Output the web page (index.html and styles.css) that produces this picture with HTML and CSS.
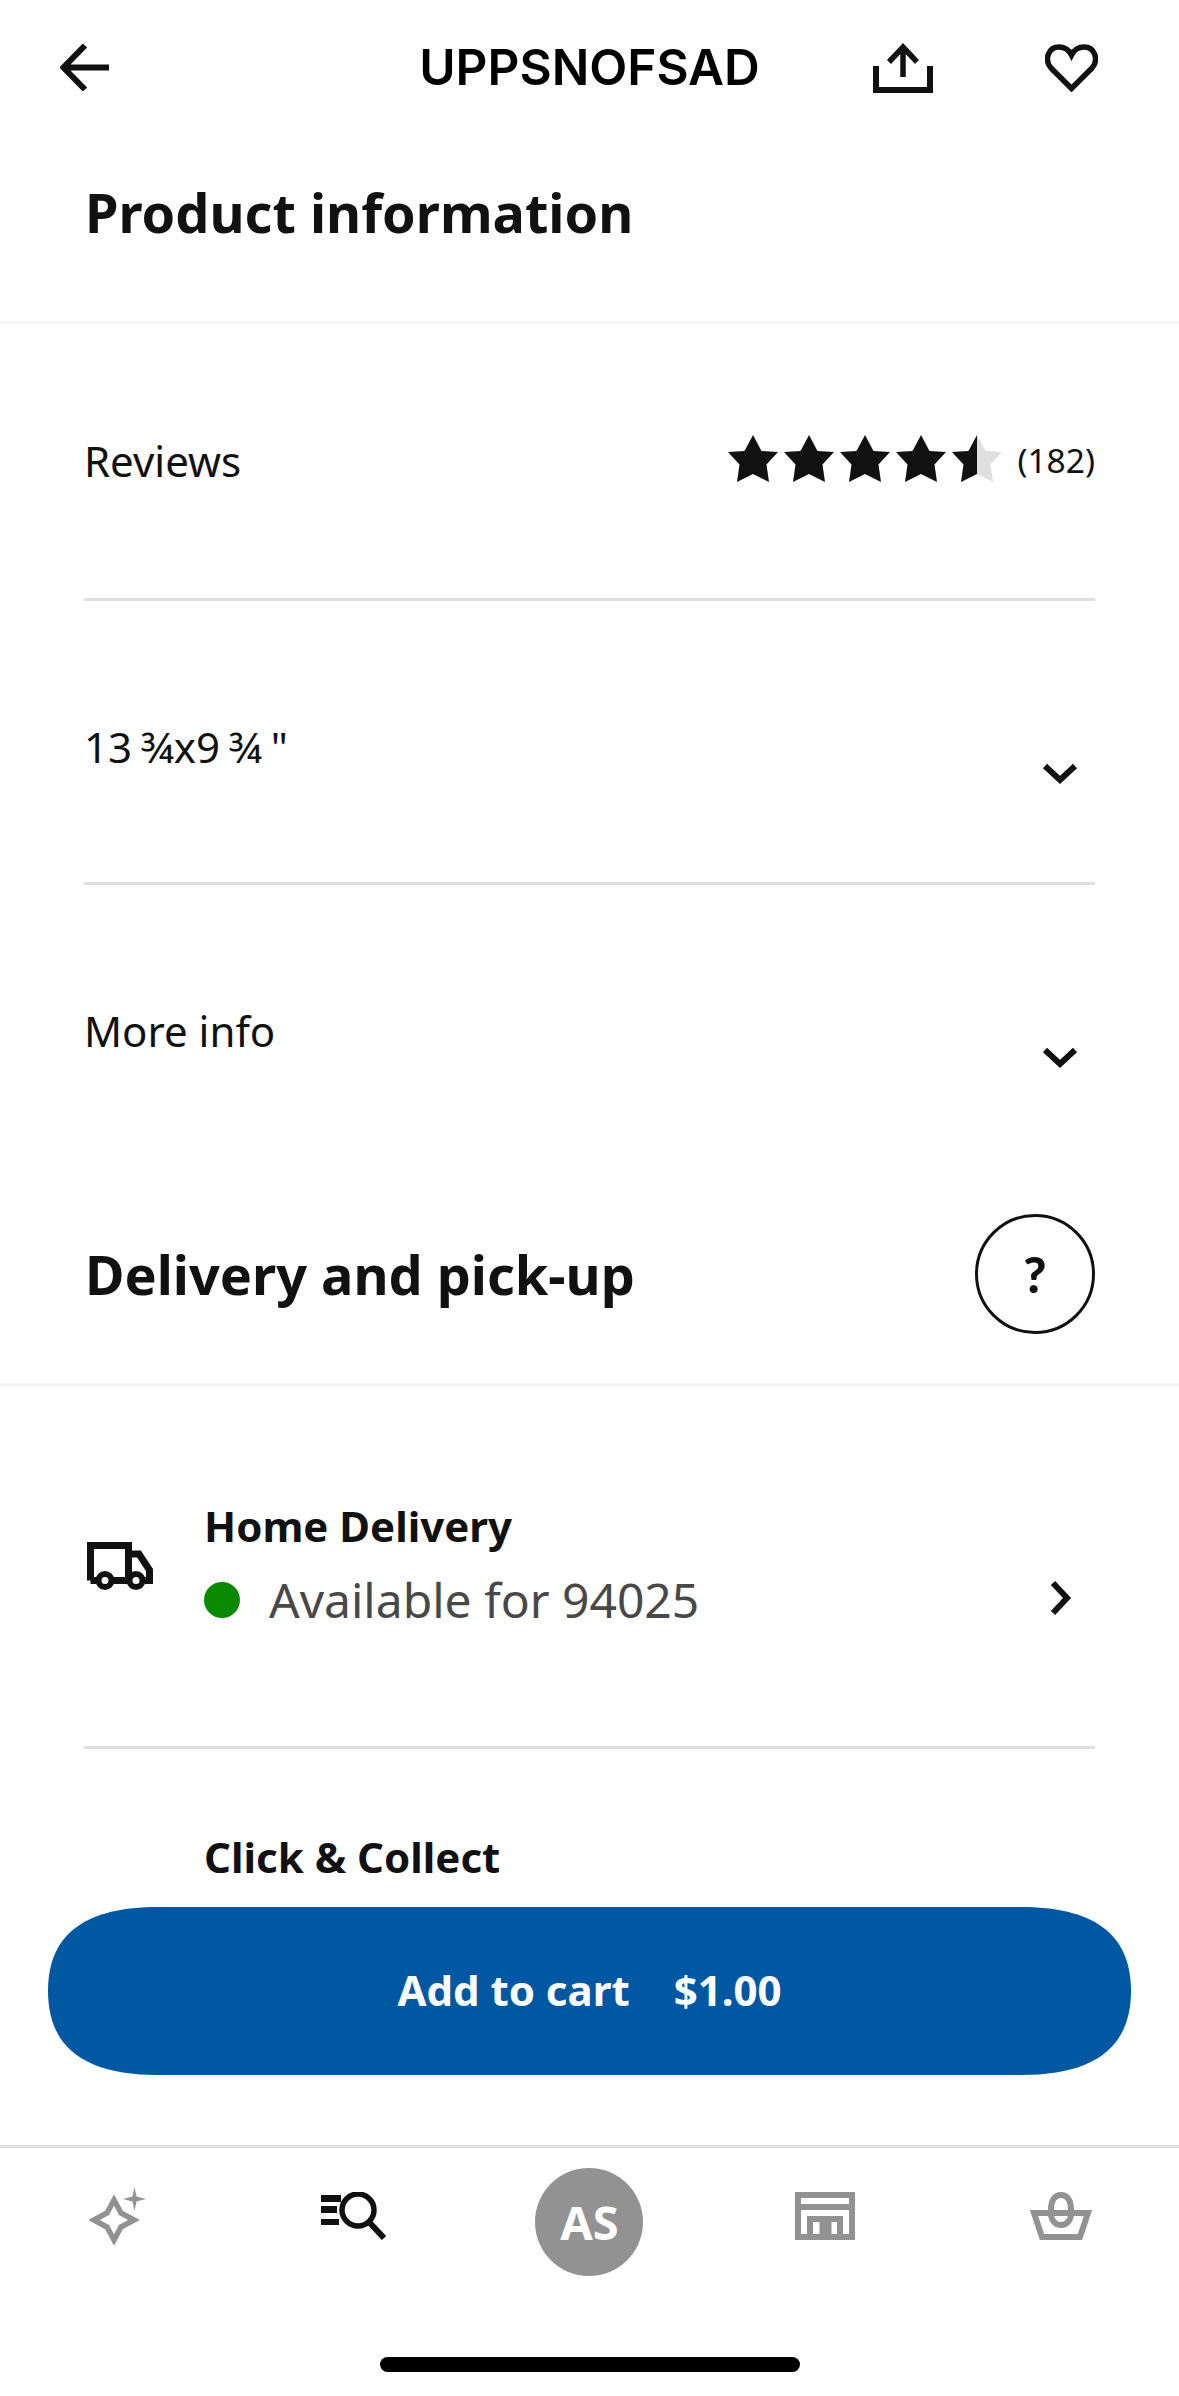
FILE: index.html
```html
<!DOCTYPE html>
<html lang="en">
<head>
    <meta charset="UTF-8">
    <meta name="viewport" content="width=device-width, initial-scale=1.0">
    <title>UPPSNOFSAD</title>
    <link rel="stylesheet" href="styles.css">
</head>
<body>
    <div class="screen">
        <header class="topbar">
            <svg class="icon-back" width="49" height="47" viewBox="0 0 49 47">
                <path d="M49 23.5H4M25 1.5L3.500 23.500L25 45.500" fill="none" stroke="#111" stroke-width="6"/>
            </svg>
            <div class="product-name">UPPSNOFSAD</div>
            <div class="top-actions">
                <svg width="60" height="51" viewBox="0 0 60 51">
                    <path d="M3 24V48H57V24" fill="none" stroke="#111" stroke-width="6"/>
                    <path d="M30 35V5M16 20L30 5L44 20" fill="none" stroke="#111" stroke-width="5.500"/>
                </svg>
                <svg class="icon-heart" width="53" height="48" viewBox="0 0 53 48">
                    <path d="M26.500 44.500L6 24C-1 16 3 3 14 3C20 3 24 6 26.500 11C29 6 33 3 39 3C50 3 54 16 47 24Z" fill="none" stroke="#111" stroke-width="5.500" stroke-linejoin="miter"/>
                </svg>
            </div>
        </header>

        <main class="content">
            <section class="section-head product-head">
                <h2>Product information</h2>
            </section>

            <div class="info-list">
                <div class="info-row reviews-row">
                    <span>Reviews</span>
                    <div class="rating">
                        <svg class="stars" width="275" height="47" viewBox="0 0 275 47">
                            <polygon points="25,0 33.500,16 50,17 38.500,29.500 41,47 25,39 9,47 11.500,29.500 0,17 16.500,16" fill="#111"/>
                            <polygon transform="translate(56 0)" points="25,0 33.500,16 50,17 38.500,29.500 41,47 25,39 9,47 11.500,29.500 0,17 16.500,16" fill="#111"/>
                            <polygon transform="translate(112 0)" points="25,0 33.500,16 50,17 38.500,29.500 41,47 25,39 9,47 11.500,29.500 0,17 16.500,16" fill="#111"/>
                            <polygon transform="translate(168 0)" points="25,0 33.500,16 50,17 38.500,29.500 41,47 25,39 9,47 11.500,29.500 0,17 16.500,16" fill="#111"/>
                            <polygon transform="translate(224 0)" points="25,0 33.500,16 50,17 38.500,29.500 41,47 25,39 9,47 11.500,29.500 0,17 16.500,16" fill="#dfdfdf"/>
                            <polygon transform="translate(224 0)" points="25,0 25,39 9,47 11.500,29.500 0,17 16.500,16" fill="#111"/>
                        </svg>
                        <span class="review-count">(182)</span>
                    </div>
                </div>
                <div class="info-row expand-row">
                    <span class="size-value">13 ¾x9 ¾ "</span>
                    <svg class="chevron" width="36" height="24" viewBox="0 0 36 24">
                        <path d="M3 4L18 18L33 4" fill="none" stroke="#111" stroke-width="6"/>
                    </svg>
                </div>
                <div class="info-row expand-row last-row">
                    <span>More info</span>
                    <svg class="chevron" width="36" height="24" viewBox="0 0 36 24">
                        <path d="M3 4L18 18L33 4" fill="none" stroke="#111" stroke-width="6"/>
                    </svg>
                </div>
            </div>

            <section class="section-head delivery-head">
                <h2>Delivery and pick-up</h2>
                <div class="help-btn">?</div>
            </section>

            <div class="delivery-row">
                <svg class="truck" width="66" height="48" viewBox="0 0 66 48">
                    <path d="M3.500 38.500V3.500H41.500V38.500M41.500 12H52L62.500 28V38.500H58M41 38.500H27M9 38.500H3.500" fill="none" stroke="#111" stroke-width="7"/>
                    <circle cx="18" cy="38.500" r="6.500" fill="#fff" stroke="#111" stroke-width="6"/>
                    <circle cx="49" cy="38.500" r="6.500" fill="#fff" stroke="#111" stroke-width="6"/>
                </svg>
                <div class="delivery-text">
                    <div class="delivery-title">Home Delivery</div>
                    <div class="delivery-status"><span class="status-dot"></span>Available for 94025</div>
                </div>
                <svg class="chevron-right" width="24" height="36" viewBox="0 0 24 36">
                    <path d="M5 3L19 18L5 33" fill="none" stroke="#111" stroke-width="6"/>
                </svg>
            </div>
            <div class="delivery-row collect-row">
                <div class="delivery-text">
                    <div class="delivery-title">Click &amp; Collect</div>
                </div>
            </div>

            <button class="add-to-cart"><span>Add to cart</span><span>$1.00</span></button>
        </main>

        <nav class="tabbar">
            <svg class="tab-icon" width="58" height="58" viewBox="0 0 58 58">
                <path d="M25 13L32 26L45 33L32 40L25 53L18 40L5 33L18 26Z" fill="none" stroke="#929292" stroke-width="5.500"/>
                <path d="M45.500 0L47.500 9.500L57 12L47.500 14.500L45.500 24L43.500 14.500L34 12L43.500 9.500Z" fill="#929292"/>
            </svg>
            <svg class="tab-icon" width="66" height="48" viewBox="0 0 66 48">
                <path d="M0 3H20V10H0ZM0 14H16V21H0ZM0 27H18V33H0Z" fill="#111"/>
                <circle cx="37" cy="18" r="16" fill="#fff" stroke="#111" stroke-width="5.500"/>
                <path d="M48 30L63 46" stroke="#111" stroke-width="6"/>
            </svg>
            <div class="avatar">AS</div>
            <svg class="tab-icon" width="60" height="48" viewBox="0 0 60 48">
                <path d="M3 3H57V45H3ZM3 15H57" fill="none" stroke="#929292" stroke-width="6"/>
                <path d="M15 45V27H45V45M27.500 30V45M33.500 30V45" fill="none" stroke="#929292" stroke-width="6"/>
            </svg>
            <svg class="tab-icon" width="62" height="48" viewBox="0 0 62 48">
                <path d="M4 21H58L50 45H12Z" fill="none" stroke="#929292" stroke-width="6"/>
                <path d="M21 18C21 8 25 3 31 3C37 3 41 8 41 18C42 28 37 33 31 33C25 33 20 28 21 18Z" fill="none" stroke="#929292" stroke-width="6"/>
            </svg>
        </nav>
        <div class="home-indicator"></div>
    </div>
</body>
</html>
```

FILE: styles.css
```css
* {
    box-sizing: border-box;
}

html, body {
    margin: 0;
    padding: 0;
    background-color: #fff;
}

body {
    font-family: "Noto Sans", sans-serif;
    color: #111;
}

.screen {
    display: flex;
    flex-direction: column;
    width: 1179px;
    height: 2396px;
    overflow: hidden;
}

/* Top bar */
.topbar {
    display: grid;
    grid-template-columns: 1fr auto 1fr;
    align-items: center;
    flex-shrink: 0;
    height: 130px;
    padding: 4px 60px 0 60px;
}

.product-name {
    font-family: Inter, sans-serif;
    font-size: 49.500px;
    font-weight: 600;
    line-height: 60px;
    color: #000;
}

.top-actions {
    display: flex;
    justify-content: flex-end;
    align-items: flex-start;
    gap: 112px;
    height: 51px;
    margin-right: 21px;
}

.icon-heart {
    margin-top: 2px;
}

/* Main content */
.content {
    position: relative;
    flex: 1;
    overflow: hidden;
}

.section-head {
    display: flex;
    justify-content: space-between;
    align-items: center;
    padding: 0 84px 0 85px;
    border-bottom: 3px solid #f5f5f5;
}

.section-head h2 {
    margin: 0;
    font-size: 54px;
    font-weight: 700;
    line-height: 72px;
}

.product-head {
    height: 194px;
    padding-bottom: 28px;
}

.delivery-head {
    height: 186px;
    padding-bottom: 36px;
}

.info-list {
    padding: 0 84px;
}

.info-row {
    display: flex;
    justify-content: space-between;
    font-size: 42px;
    line-height: 56px;
    border-bottom: 3px solid #dfdfdf;
}

.reviews-row {
    align-items: center;
    height: 277px;
}

.expand-row {
    align-items: flex-start;
    height: 284px;
    padding-top: 118px;
}

.last-row {
    height: 315px;
    border-bottom: none;
}

.size-value {
    word-spacing: -2px;
}

.chevron {
    margin: 43px 17px 0 0;
}

.rating {
    display: flex;
    align-items: center;
    gap: 14px;
}

.stars {
    margin-top: -6px;
}

.review-count {
    font-size: 33.500px;
    margin-top: -2px;
}

.help-btn {
    display: flex;
    justify-content: center;
    align-items: center;
    width: 120px;
    height: 120px;
    border: 3px solid #111;
    border-radius: 50%;
    font-family: Lato, sans-serif;
    font-size: 50px;
    font-weight: 900;
}

/* Delivery rows */
.delivery-row {
    display: flex;
    align-items: center;
    height: 363px;
    margin: 0 84px;
    border-bottom: 3px solid #dfdfdf;
}

.collect-row {
    align-items: flex-start;
    padding-top: 80px;
    border-bottom: none;
}

.collect-row .delivery-text {
    margin-left: 120px;
}

.truck {
    flex-shrink: 0;
    margin: 0 51px 0 3px;
}

.delivery-text {
    flex: 1;
}

.delivery-title {
    margin-top: -2px;
    font-size: 42px;
    font-weight: 700;
    line-height: 56px;
}

.collect-row .delivery-title {
    margin-top: 0;
}

.delivery-status {
    display: flex;
    align-items: center;
    margin-top: 14px;
    font-size: 48px;
    line-height: 64px;
    color: #484848;
}

.status-dot {
    width: 36px;
    height: 36px;
    margin-right: 29px;
    border-radius: 50%;
    background-color: #0a8a00;
}

.chevron-right {
    margin: 64px 23px 0 0;
}

/* Floating cart button */
.add-to-cart {
    position: absolute;
    left: 48px;
    top: 1777px;
    display: flex;
    justify-content: center;
    align-items: center;
    gap: 44px;
    width: 1083px;
    height: 168px;
    padding: 0 0 3px 0;
    border: none;
    background-color: #0058a3;
    color: #fff;
    font-family: "Noto Sans", sans-serif;
    font-size: 42px;
    font-weight: 700;
    clip-path: path("M110 0C40 0 0 25 0 84C0 143 40 168 110 168H973C1043 168 1083 143 1083 84C1083 25 1043 0 973 0Z");
}

/* Bottom tabs */
.tabbar {
    display: grid;
    grid-template-columns: repeat(5, 1fr);
    justify-items: center;
    align-items: center;
    flex-shrink: 0;
    height: 251px;
    padding-bottom: 100px;
    border-top: 3px solid #dfdfdf;
}

.tab-icon {
    margin-bottom: 12px;
}

.avatar {
    display: flex;
    justify-content: center;
    align-items: center;
    width: 108px;
    height: 108px;
    border-radius: 50%;
    background-color: #929292;
    color: #fff;
    font-size: 47px;
    font-weight: 700;
}

.home-indicator {
    position: absolute;
    left: 380px;
    top: 2357px;
    width: 420px;
    height: 15px;
    border-radius: 8px;
    background-color: #000;
}
```
